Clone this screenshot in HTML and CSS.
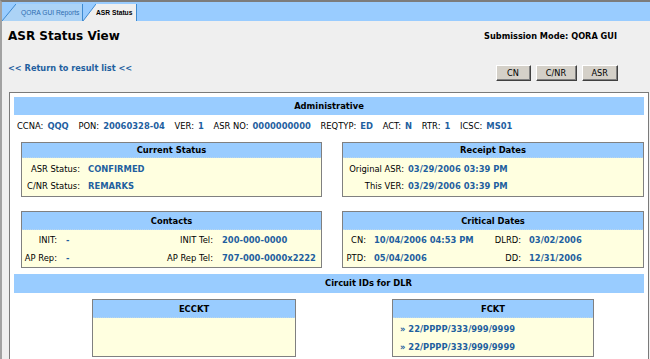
FILE: index.html
```html
<!DOCTYPE html>
<html>
<head>
<meta charset="utf-8">
<title>ASR Status View</title>
<link rel="stylesheet" href="styles.css">
</head>
<body>
<div class="page">
  <div class="tabbar">
    <div class="tab tab-off">
      <svg class="slant" width="14" height="17" viewBox="0 0 14 17"><polygon points="0,17 14,0 14,17"/><line x1="0" y1="17" x2="14" y2="0"/></svg>
      <span class="tab-label">QORA GUI Reports</span>
    </div>
    <div class="tab tab-on">
      <svg class="slant" width="13" height="17" viewBox="0 0 13 17"><polygon points="0,17 13,0 13,17"/><line x1="0" y1="17" x2="13" y2="0"/></svg>
      <span class="tab-label">ASR Status</span>
    </div>
  </div>

  <div class="titlerow">
    <h1 class="title">ASR Status View</h1>
    <div class="mode">Submission Mode: QORA GUI</div>
  </div>

  <div class="actionrow">
    <a class="back" href="#">&lt;&lt; Return to result list &lt;&lt;</a>
    <div class="buttons">
      <button class="btn" type="button">CN</button>
      <button class="btn btn-wide" type="button">C/NR</button>
      <button class="btn" type="button">ASR</button>
    </div>
  </div>

  <div class="panel">
    <div class="bar">Administrative</div>
    <div class="inforow">
      <span class="item"><span class="lbl">CCNA:</span><b class="val">QQQ</b></span>
      <span class="item"><span class="lbl">PON:</span><b class="val">20060328-04</b></span>
      <span class="item"><span class="lbl">VER:</span><b class="val">1</b></span>
      <span class="item"><span class="lbl">ASR NO:</span><b class="val">0000000000</b></span>
      <span class="item"><span class="lbl">REQTYP:</span><b class="val">ED</b></span>
      <span class="item"><span class="lbl">ACT:</span><b class="val">N</b></span>
      <span class="item"><span class="lbl">RTR:</span><b class="val">1</b></span>
      <span class="item"><span class="lbl">ICSC:</span><b class="val">MS01</b></span>
    </div>

    <div class="pair pair-first">
      <div class="box">
        <div class="box-head head-sm">Current Status</div>
        <div class="box-body body-sm kv kv-status">
          <span class="k">ASR Status:</span><b class="v">CONFIRMED</b>
          <span class="k">C/NR Status:</span><b class="v">REMARKS</b>
        </div>
      </div>
      <div class="box">
        <div class="box-head head-sm">Receipt Dates</div>
        <div class="box-body body-sm kv kv-receipt">
          <span class="k">Original ASR:</span><b class="v">03/29/2006 03:39 PM</b>
          <span class="k">This VER:</span><b class="v">03/29/2006 03:39 PM</b>
        </div>
      </div>
    </div>

    <div class="pair pair-second">
      <div class="box">
        <div class="box-head head-lg">Contacts</div>
        <div class="box-body body-lg kv kv-contacts">
          <span class="k">INIT:</span><b class="v">-</b>
          <span class="k">INIT Tel:</span><b class="v">200-000-0000</b>
          <span class="k">AP Rep:</span><b class="v">-</b>
          <span class="k">AP Rep Tel:</span><b class="v">707-000-0000x2222</b>
        </div>
      </div>
      <div class="box">
        <div class="box-head head-lg">Critical Dates</div>
        <div class="box-body body-lg kv kv-critical">
          <span class="k">CN:</span><b class="v">10/04/2006 04:53 PM</b>
          <span class="k">DLRD:</span><b class="v">03/02/2006</b>
          <span class="k">PTD:</span><b class="v">05/04/2006</b>
          <span class="k">DD:</span><b class="v">12/31/2006</b>
        </div>
      </div>
    </div>

    <div class="bar bar-circuit">Circuit IDs for DLR</div>

    <div class="circuits">
      <div class="box box-ecckt">
        <div class="box-head head-lg">ECCKT</div>
        <div class="box-body body-ckt"></div>
      </div>
      <div class="box box-fckt">
        <div class="box-head head-lg">FCKT</div>
        <div class="box-body body-ckt ckt-list">
          <b class="v">&raquo; 22/PPPP/333/999/9999</b>
          <b class="v">&raquo; 22/PPPP/333/999/9999</b>
        </div>
      </div>
    </div>
  </div>
</div>
</body>
</html>
```

FILE: styles.css
```css
html, body {
  margin: 0;
  padding: 0;
}

body {
  width: 650px;
  height: 359px;
  overflow: hidden;
  background: #efefef;
  font-family: "DejaVu Sans", Verdana, sans-serif;
  font-size: 8.4px;
  color: #000;
}

.page {
  border-top: 2px solid #7c7c7c;
  border-left: 2px solid #a2a2a2;
  min-height: 400px;
  box-sizing: border-box;
}

/* ---------- tabs ---------- */
.tabbar {
  height: 19px;
  background: #99ccff;
  display: flex;
  align-items: flex-end;
}

.tab {
  display: flex;
  height: 17px;
}

.slant {
  display: block;
  flex: none;
}

.slant line {
  stroke: #3f8ad0;
  stroke-width: 1;
}

.tab-label {
  display: flex;
  align-items: center;
  border-right: 1px solid #3f8ad0;
  font-family: "Liberation Sans", Arial, sans-serif;
  font-size: 6.7px;
  white-space: nowrap;
}

.tab-off .slant polygon { fill: #acd3f6; }
.tab-off .tab-label {
  background: #acd3f6;
  color: #2c6cb0;
  padding: 0 2px 0 5px;
  width: 59px;
}

.tab-on .slant polygon { fill: #efefef; }
.tab-on .tab-label {
  background: #efefef;
  font-weight: bold;
  padding: 0 2px 0 0;
  width: 38px;
}

/* ---------- header ---------- */
.titlerow {
  display: flex;
  justify-content: space-between;
  align-items: center;
  padding: 8px 33px 0 6px;
  height: 14px;
}

.title {
  margin: 0;
  font-size: 12px;
  line-height: 14px;
  font-weight: bold;
}

.mode {
  font-weight: bold;
  font-size: 8.2px;
}

.actionrow {
  display: flex;
  justify-content: space-between;
  align-items: flex-start;
  margin-top: 19px;
  padding: 0 32px 0 6px;
}

.back {
  color: #1f5f9f;
  font-weight: bold;
  font-size: 8.2px;
  line-height: 12px;
  text-decoration: none;
}

.buttons {
  display: flex;
  gap: 5px;
  margin-top: 3px;
}

.btn {
  height: 16px;
  min-width: 35px;
  padding: 0 9px;
  margin: 0;
  background: #d4d0c8;
  border: 1px solid;
  border-color: #ffffff #404040 #404040 #ffffff;
  box-shadow: inset -1px -1px 0 #808080;
  font-family: "DejaVu Sans", Verdana, sans-serif;
  font-size: 8.2px;
  color: #000;
  line-height: 12px;
}

.btn-wide {
  min-width: 41px;
}

/* ---------- panel ---------- */
.panel {
  margin: 11px 0 0 7px;
  width: 640px;
  box-sizing: border-box;
  border: 1px solid #7a7a7a;
  background: #ffffff;
  padding: 4px 4px 40px 4px;
}

.bar {
  background: #99ccff;
  height: 18px;
  line-height: 18px;
  text-align: center;
  font-weight: bold;
}

.bar-circuit {
  margin-top: 6px;
  height: 19px;
  line-height: 19px;
  text-align: left;
  padding-left: 311px;
}

.inforow {
  height: 22px;
  line-height: 22px;
  padding-left: 3px;
  white-space: nowrap;
}

.item {
  margin-right: 7px;
}

.lbl {
  margin-right: 4px;
}

.val, .v {
  color: #1f5f9f;
  font-weight: bold;
}

.pair {
  display: grid;
  grid-template-columns: 301px 302px;
  column-gap: 20px;
  padding-left: 7px;
}

.pair-first { margin-top: 5px; }
.pair-second { margin-top: 14px; }

.box {
  border: 1px solid #808080;
  background: #ffffe0;
}

.box-head {
  background: #99ccff;
  text-align: center;
  font-weight: bold;
  border-bottom: 1px dotted #b9d6ee;
  box-sizing: border-box;
}

.head-sm { height: 15px; line-height: 15px; }
.head-lg { height: 18px; line-height: 18px; }

.kv {
  display: grid;
  align-content: start;
  white-space: nowrap;
}

.k { text-align: right; }

.body-sm {
  padding: 3px 0 1px 0;
  grid-auto-rows: 17px;
  line-height: 17px;
}

.body-lg {
  padding: 1px 0 0 0;
  grid-auto-rows: 18px;
  line-height: 18px;
}

.kv-status {
  grid-template-columns: 58px auto;
  column-gap: 8px;
}

.kv-receipt {
  grid-template-columns: 61px auto;
  column-gap: 4px;
}

.kv-contacts {
  grid-template-columns: 35px 82px 56px auto;
  column-gap: 9px;
}

.kv-critical {
  grid-template-columns: 23px 110px 29px auto;
  column-gap: 8px;
}

/* ---------- circuits ---------- */
.circuits {
  display: flex;
  align-items: stretch;
  margin-top: 6px;
  padding-left: 78px;
  gap: 96px;
}

.box-ecckt { width: 204px; box-sizing: border-box; }
.box-fckt { width: 202px; box-sizing: border-box; }

.box-circ-head { height: 19px; }

.body-ckt {
  min-height: 38px;
  padding-top: 2px;
  box-sizing: border-box;
}

.ckt-list {
  display: flex;
  flex-direction: column;
  padding-left: 7px;
  line-height: 18px;
}
```
